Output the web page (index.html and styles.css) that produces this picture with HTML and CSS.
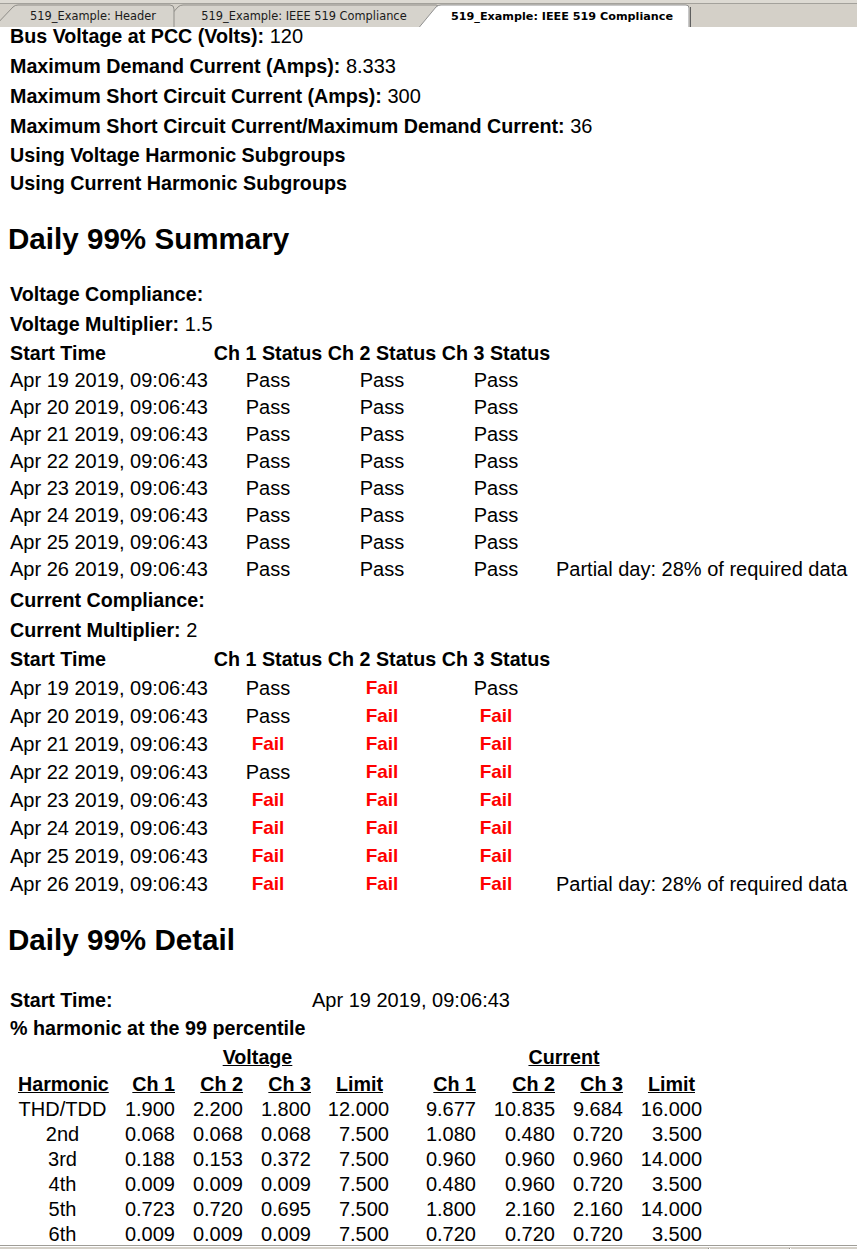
FILE: index.html
```html
<!DOCTYPE html>
<html>
<head>
<meta charset="utf-8">
<title>519_Example: IEEE 519 Compliance</title>
<link rel="stylesheet" href="styles.css">
</head>
<body>
<div class="app">
  <div class="tabbar">
    <svg class="tab tab1" width="175" height="27" viewBox="0 0 175 27">
      <path class="tab-shape" d="M-6,27 L13,7 Q15,5 18,5 L170,5 Q174,5 174,9 L174,27"/>
      <text x="93" y="20" class="tab-label">519_Example: Header</text>
    </svg>
    <svg class="tab tab2" width="280" height="27" viewBox="160 0 280 27">
      <path class="tab-shape" d="M160,27 L178,7 Q180,5 183,5 L436,5 Q440,5 440,9 L440,27"/>
      <text x="304" y="20" class="tab-label">519_Example: IEEE 519 Compliance</text>
    </svg>
    <svg class="tab tab3" width="274" height="27" viewBox="418 0 274 27">
      <path class="tab-shape active-shape" d="M419,27.5 L436,7 Q438,5 441,5 L686,5 Q689,5 689,8 L689,27.5"/>
      <line x1="690.5" y1="7" x2="690.5" y2="27" class="tab-shadow"/>
      <text x="562" y="20" class="tab-label active-label">519_Example: IEEE 519 Compliance</text>
    </svg>
  </div>

  <div class="view">
    <div class="doc">
      <div class="info">
        <div class="line h30"><b>Bus Voltage at PCC (Volts):</b> 120</div>
        <div class="line h30"><b>Maximum Demand Current (Amps):</b> 8.333</div>
        <div class="line h30"><b>Maximum Short Circuit Current (Amps):</b> 300</div>
        <div class="line h30"><b>Maximum Short Circuit Current/Maximum Demand Current:</b> 36</div>
        <div class="line h28"><b>Using Voltage Harmonic Subgroups</b></div>
        <div class="line h28"><b>Using Current Harmonic Subgroups</b></div>
      </div>

      <h2 class="heading">Daily 99% Summary</h2>

      <div class="section">
        <div class="line h30"><b>Voltage Compliance:</b></div>
        <div class="line h30"><b>Voltage Multiplier:</b> 1.5</div>
        <div class="srow shead h28"><span>Start Time</span><span class="c">Ch 1 Status</span><span class="c">Ch 2 Status</span><span class="c">Ch 3 Status</span><span></span></div>
        <div class="srow h27"><span>Apr 19 2019, 09:06:43</span><span class="c">Pass</span><span class="c">Pass</span><span class="c">Pass</span><span></span></div>
        <div class="srow h27"><span>Apr 20 2019, 09:06:43</span><span class="c">Pass</span><span class="c">Pass</span><span class="c">Pass</span><span></span></div>
        <div class="srow h27"><span>Apr 21 2019, 09:06:43</span><span class="c">Pass</span><span class="c">Pass</span><span class="c">Pass</span><span></span></div>
        <div class="srow h27"><span>Apr 22 2019, 09:06:43</span><span class="c">Pass</span><span class="c">Pass</span><span class="c">Pass</span><span></span></div>
        <div class="srow h27"><span>Apr 23 2019, 09:06:43</span><span class="c">Pass</span><span class="c">Pass</span><span class="c">Pass</span><span></span></div>
        <div class="srow h27"><span>Apr 24 2019, 09:06:43</span><span class="c">Pass</span><span class="c">Pass</span><span class="c">Pass</span><span></span></div>
        <div class="srow h27"><span>Apr 25 2019, 09:06:43</span><span class="c">Pass</span><span class="c">Pass</span><span class="c">Pass</span><span></span></div>
        <div class="srow h27"><span>Apr 26 2019, 09:06:43</span><span class="c">Pass</span><span class="c">Pass</span><span class="c">Pass</span><span class="note">Partial day: 28% of required data</span></div>

        <div class="line h30 gap2"><b>Current Compliance:</b></div>
        <div class="line h30"><b>Current Multiplier:</b> 2</div>
        <div class="srow shead h29"><span>Start Time</span><span class="c">Ch 1 Status</span><span class="c">Ch 2 Status</span><span class="c">Ch 3 Status</span><span></span></div>
        <div class="srow h28"><span>Apr 19 2019, 09:06:43</span><span class="c">Pass</span><span class="c fail">Fail</span><span class="c">Pass</span><span></span></div>
        <div class="srow h28"><span>Apr 20 2019, 09:06:43</span><span class="c">Pass</span><span class="c fail">Fail</span><span class="c fail">Fail</span><span></span></div>
        <div class="srow h28"><span>Apr 21 2019, 09:06:43</span><span class="c fail">Fail</span><span class="c fail">Fail</span><span class="c fail">Fail</span><span></span></div>
        <div class="srow h28"><span>Apr 22 2019, 09:06:43</span><span class="c">Pass</span><span class="c fail">Fail</span><span class="c fail">Fail</span><span></span></div>
        <div class="srow h28"><span>Apr 23 2019, 09:06:43</span><span class="c fail">Fail</span><span class="c fail">Fail</span><span class="c fail">Fail</span><span></span></div>
        <div class="srow h28"><span>Apr 24 2019, 09:06:43</span><span class="c fail">Fail</span><span class="c fail">Fail</span><span class="c fail">Fail</span><span></span></div>
        <div class="srow h28"><span>Apr 25 2019, 09:06:43</span><span class="c fail">Fail</span><span class="c fail">Fail</span><span class="c fail">Fail</span><span></span></div>
        <div class="srow h28"><span>Apr 26 2019, 09:06:43</span><span class="c fail">Fail</span><span class="c fail">Fail</span><span class="c fail">Fail</span><span class="note">Partial day: 28% of required data</span></div>
      </div>

      <h2 class="heading">Daily 99% Detail</h2>

      <div class="detail">
        <div class="drow-top h28"><b>Start Time:</b><span>Apr 19 2019, 09:06:43</span></div>
        <div class="line h28"><b>% harmonic at the 99 percentile</b></div>
        <div class="dgrid group h30">
          <span class="grp grp-v">Voltage</span>
          <span class="grp grp-i">Current</span>
        </div>
        <div class="dgrid dhead h25">
          <span class="hc"><u>Harmonic</u></span>
          <span class="r"><u>Ch 1</u></span>
          <span class="r"><u>Ch 2</u></span>
          <span class="r"><u>Ch 3</u></span>
          <span class="r lim"><u>Limit</u></span>
          <span class="r"><u>Ch 1</u></span>
          <span class="r"><u>Ch 2</u></span>
          <span class="r"><u>Ch 3</u></span>
          <span class="r lim2"><u>Limit</u></span>
        </div>
        <div class="dgrid h25"><span class="hc">THD/TDD</span><span class="r">1.900</span><span class="r">2.200</span><span class="r">1.800</span><span class="r">12.000</span><span class="r">9.677</span><span class="r">10.835</span><span class="r">9.684</span><span class="r">16.000</span></div>
        <div class="dgrid h25"><span class="hc">2nd</span><span class="r">0.068</span><span class="r">0.068</span><span class="r">0.068</span><span class="r">7.500</span><span class="r">1.080</span><span class="r">0.480</span><span class="r">0.720</span><span class="r">3.500</span></div>
        <div class="dgrid h25"><span class="hc">3rd</span><span class="r">0.188</span><span class="r">0.153</span><span class="r">0.372</span><span class="r">7.500</span><span class="r">0.960</span><span class="r">0.960</span><span class="r">0.960</span><span class="r">14.000</span></div>
        <div class="dgrid h25"><span class="hc">4th</span><span class="r">0.009</span><span class="r">0.009</span><span class="r">0.009</span><span class="r">7.500</span><span class="r">0.480</span><span class="r">0.960</span><span class="r">0.720</span><span class="r">3.500</span></div>
        <div class="dgrid h25"><span class="hc">5th</span><span class="r">0.723</span><span class="r">0.720</span><span class="r">0.695</span><span class="r">7.500</span><span class="r">1.800</span><span class="r">2.160</span><span class="r">2.160</span><span class="r">14.000</span></div>
        <div class="dgrid h25"><span class="hc">6th</span><span class="r">0.009</span><span class="r">0.009</span><span class="r">0.009</span><span class="r">7.500</span><span class="r">0.720</span><span class="r">0.720</span><span class="r">0.720</span><span class="r">3.500</span></div>
      </div>
    </div>
  </div>

  <div class="statusbar">
    <div class="pane pane-main"></div>
    <div class="pane pane-mid"></div>
    <div class="pane pane-end"></div>
  </div>
</div>
</body>
</html>
```

FILE: styles.css
```css
html, body {
  margin: 0;
  padding: 0;
  background: #ffffff;
}

body {
  width: 857px;
  height: 1249px;
  overflow: hidden;
  font-family: "Liberation Sans", Arial, sans-serif;
  font-size: 20px;
  color: #000000;
}

.app {
  height: 1249px;
  display: flex;
  flex-direction: column;
}

/* ---------- tab strip ---------- */
.tabbar {
  flex: none;
  height: 27px;
  margin-bottom: -3px;
  display: flex;
  background: linear-gradient(#dddad3 0, #dddad3 3px, #a3a19b 3px, #a3a19b 4px, #d4d0c8 4px);
  position: relative;
  z-index: 2;
  overflow: hidden;
}

.tab {
  display: block;
  flex: none;
}

.tab1 {
  z-index: 2;
}

.tab2 {
  margin-left: -15px;
  z-index: 1;
}

.tab3 {
  margin-left: -22px;
  z-index: 3;
}

.tab-shape {
  fill: #d6d3cc;
  stroke: #8f8d88;
  stroke-width: 1;
}

.active-shape {
  fill: #ffffff;
  stroke: #919191;
}

.tab-shadow {
  stroke: #5f5f5f;
  stroke-width: 1;
}

.tab-label {
  font-family: "DejaVu Sans", Verdana, sans-serif;
  font-size: 11.4px;
  fill: #1a1a1a;
  text-anchor: middle;
}

.active-label {
  font-weight: bold;
  font-size: 11.2px;
  fill: #000000;
}

/* ---------- document view ---------- */
.view {
  flex: 1;
  overflow: hidden;
  background: #ffffff;
  position: relative;
  z-index: 1;
}

.doc {
  margin-top: -3px;
}

.line {
  padding-left: 10px;
  white-space: nowrap;
}

b {
  font-size: 19.7px;
}

.h25 { height: 25px; line-height: 25px; }
.h27 { height: 27px; line-height: 27px; }
.h28 { height: 28px; line-height: 28px; }
.h29 { height: 29px; line-height: 29px; }
.h30 { height: 30px; line-height: 30px; }

.gap2 {
  margin-top: 2px;
}

.heading {
  margin: 22px 0 20px 0;
  padding-left: 8px;
  height: 40px;
  line-height: 40px;
  font-size: 29.6px;
  font-weight: bold;
}

/* summary tables */
.srow {
  display: grid;
  grid-template-columns: 199px 110px 110px 110px auto;
  column-gap: 4px;
  padding-left: 10px;
  white-space: nowrap;
}

.shead span {
  font-weight: bold;
  font-size: 19.7px;
}

.c {
  text-align: center;
}

.fail {
  color: #ff0000;
  font-weight: bold;
  font-size: 19px;
}

.note {
  padding-left: 1px;
}

/* detail */
.detail {
  margin-top: 26px;
}

.drow-top {
  display: grid;
  grid-template-columns: 302px auto;
  padding-left: 10px;
  white-space: nowrap;
}

.dgrid {
  display: grid;
  grid-template-columns: 89px 68px 68px 68px 78px 87px 79px 68px 79px;
  padding-left: 18px;
  white-space: nowrap;
}

.dhead {
  font-weight: bold;
  font-size: 19.7px;
}

.hc {
  text-align: center;
}

.r {
  text-align: right;
}

.lim {
  padding-right: 6px;
}

.lim2 {
  padding-right: 7px;
}

.grp {
  font-weight: bold;
  font-size: 19.7px;
  text-decoration: underline;
  text-align: center;
}

.grp-v {
  grid-column: 2 / 6;
  padding-left: 19px;
}

.grp-i {
  grid-column: 6 / 10;
  padding-left: 37px;
}

/* ---------- status bar ---------- */
.statusbar {
  flex: none;
  height: 3px;
  border-top: 1px solid #9f9d97;
  display: flex;
  background: #d4d0c8;
  box-shadow: inset 0 1px 0 #ffffff;
}

.pane {
  margin-top: 2px;
  border-right: 1px solid #8c8a85;
  box-shadow: 1px 0 0 #ffffff;
}

.pane-main {
  width: 708px;
}

.pane-mid {
  width: 80px;
}

.pane-end {
  flex: 1;
  border-right: none;
  box-shadow: none;
}
```
